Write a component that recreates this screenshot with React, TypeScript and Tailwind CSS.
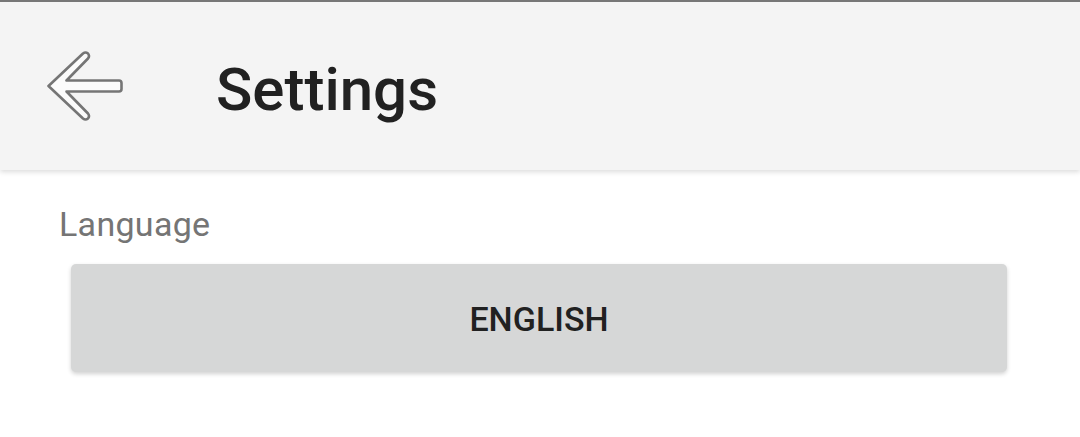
import React from 'react';

function BackArrow() {
    return (
        <svg width="80" height="72" viewBox="45 50 80 72" className="shrink-0">
            <path
                d="M48.5 86 L83 53.5 Q85.5 51.5 88 53.5 Q90 56 88 58.5 L66.5 80.5 L119 80.5 Q121.5 80.5 121.5 83 L121.5 89 Q121.5 91.5 119 91.5 L66.5 91.5 L88 113.5 Q90 116 88 118.5 Q85.5 120.5 83 118.5 L48.5 86 Z"
                fill="#fbfbfb"
                stroke="#757575"
                strokeWidth="2.6"
                strokeLinejoin="round"
            />
        </svg>
    );
}

export default function App() {
    return (
        <div className="w-[1080px] h-[437px] bg-white overflow-hidden font-['Roboto',sans-serif] border-t-2 border-[#777777]">
            <header className="relative z-10 h-[168px] bg-[#f4f4f4] shadow-[0_2px_5px_rgba(0,0,0,0.14)] flex items-center pl-[45px]">
                <BackArrow />
                <h1 className="ml-[91px] pt-[7px] text-[60px] leading-none font-medium text-[#212121]">Settings</h1>
            </header>

            <main className="pt-[37px] pl-[59px]">
                <p className="text-[34px] leading-none tracking-[0.3px] text-[#757575]">Language</p>
                <button className="mt-[23px] ml-[12px] w-[936px] h-[108px] rounded-[5px] bg-[#d6d7d7] shadow-[0_2px_4px_rgba(0,0,0,0.18)] flex items-center justify-center pt-[2px]">
                    <span className="text-[34px] leading-none font-medium text-[#212121]">ENGLISH</span>
                </button>
            </main>
        </div>
    );
}
